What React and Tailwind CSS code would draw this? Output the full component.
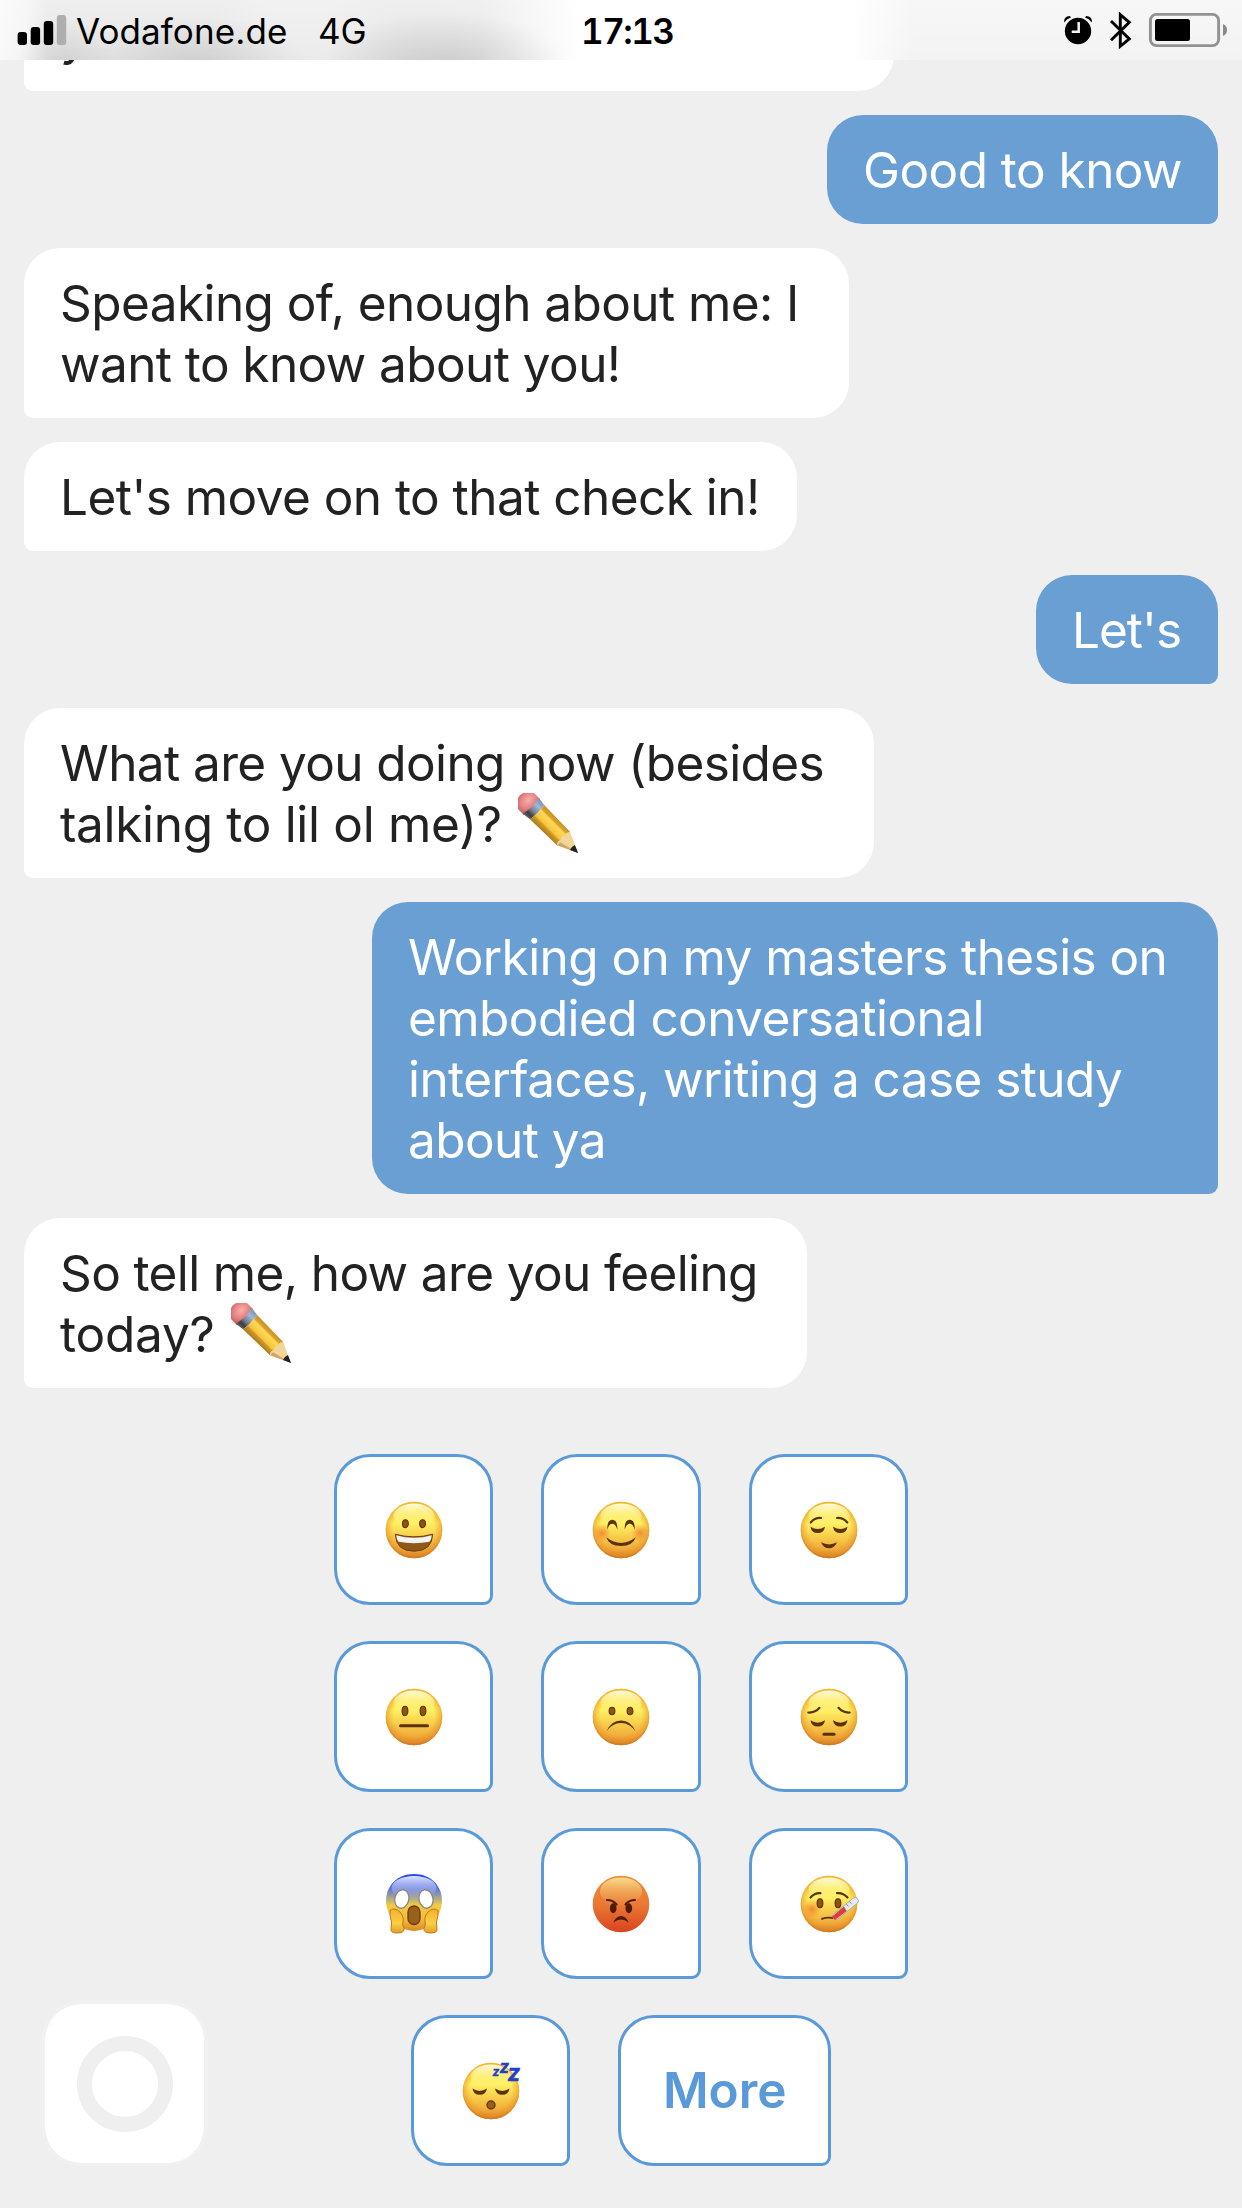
import React from "react";

const INK = "#5c3209";

function StatusBar() {
  return (
    <header className="absolute inset-x-0 top-0 z-10 flex h-[60px] items-center overflow-hidden bg-[linear-gradient(90deg,#f9f9f9_0px,#f4f4f4_25px,#e6e6e6_48px,#e6e6e6_210px,#ebebeb_270px,#ebebeb_330px,#e6e6e6_400px,#e8e8e8_480px,#f4f4f4_530px,#ffffff_580px,#ffffff_850px,#f3f3f3_915px,#f3f3f3_100%)]">
      <div className="absolute inset-0 bg-[radial-gradient(ellipse_50px_46px_at_66px_66px,#00000018,transparent),radial-gradient(ellipse_115px_52px_at_195px_68px,#0000001c,transparent),radial-gradient(ellipse_125px_56px_at_445px_68px,#0000001f,transparent),linear-gradient(180deg,#ffffff55,transparent)]" />
      <div className="relative flex h-full w-full items-center">
        <svg className="ml-[17px] h-[60px] w-[50px] shrink-0" viewBox="17 0 50 60" aria-label="Signal strength">
          <rect x="17.6" y="32" width="9.4" height="13" rx="3" />
          <rect x="30.7" y="27" width="9.4" height="18" rx="3" />
          <rect x="43.8" y="21" width="9.4" height="24" rx="3" />
          <rect x="56.8" y="15" width="9.4" height="30" rx="3" fill="#aeaeae" />
        </svg>
        <span className="ml-[9px] w-[242px] pt-[2px] text-[35px] leading-[60px] tracking-[0.1px]">Vodafone.de</span>
        <span className="pt-[2px] text-[35px] leading-[60px]">4G</span>
        <span className="absolute left-[581px] pt-[2px] text-[35px] font-semibold leading-[60px] tracking-[-1.5px] tabular-nums">17:13</span>
        <div className="ml-auto flex h-full items-center">
          <svg className="h-[60px] w-[192px]" viewBox="1050 0 192 60" aria-label="Alarm, Bluetooth, battery">
            <circle cx="1078" cy="31" r="13.2" />
            <path d="M1064.300 22.500q-.8-6.500 5.500-6.500l1.200 1.500q-4 1.200-6.700 5zM1091.700 22.500q.8-6.500-5.500-6.500l-1.200 1.500q4 1.200 6.700 5z" />
            <path d="M1078.700 22v9.700h-7" fill="none" stroke="#f3f3f3" strokeWidth="2.500" />
            <path d="M1111 21l18.300 18-9 7.300v-31.600l9 7.600-18.300 18" fill="none" stroke="#000" strokeWidth="2.900" />
            <rect x="1150.400" y="14.400" width="68.200" height="31.200" rx="6" fill="none" stroke="#929292" strokeWidth="2.900" />
            <rect x="1155" y="19" width="35" height="22" rx="2.5" />
            <path d="M1223 24q4 1.5 4 6t-4 6z" fill="#8a8a8a" />
          </svg>
        </div>
      </div>
    </header>
  );
}

function Pencil() {
  return (
    <svg className="-mt-[6px] ml-[3px] inline-block h-[60px] w-[60px] align-[-11px]" viewBox="0 0 60 60" aria-label="Pencil">
      <defs>
        <linearGradient id="pencilBody" x1="0" y1="0" x2="0" y2="1">
          <stop offset="0" stopColor="#c88f22" />
          <stop offset=".22" stopColor="#d9a42e" />
          <stop offset=".3" stopColor="#ffd95a" />
          <stop offset=".66" stopColor="#f6c53a" />
          <stop offset=".74" stopColor="#cf9a28" />
          <stop offset="1" stopColor="#a8791c" />
        </linearGradient>
        <linearGradient id="pencilMetal" x1="0" y1="0" x2="0" y2="1">
          <stop offset="0" stopColor="#7890b4" />
          <stop offset=".3" stopColor="#a3b6d2" />
          <stop offset=".6" stopColor="#77808f" />
          <stop offset=".8" stopColor="#3c3c40" />
          <stop offset="1" stopColor="#66666a" />
        </linearGradient>
        <radialGradient id="pencilEraser" cx=".55" cy=".4" r=".7">
          <stop offset="0" stopColor="#f8b0ae" />
          <stop offset=".6" stopColor="#e4807f" />
          <stop offset="1" stopColor="#b9585c" />
        </radialGradient>
      </defs>
      <g transform="rotate(45)">
        <path d="M20-11.3H12Q4-10 3 0Q4 9.500 12 11.300H20z" fill="url(#pencilEraser)" />
        <path d="M18-11.300Q21 0 18 11.300L27 10Q29 0 27-10z" fill="url(#pencilMetal)" />
        <path d="M27-10Q29 0 27 10L64.500 9.300L67 0L64.500-9.300z" fill="url(#pencilBody)" />
        <path d="M64.500-9.300L84.500 0L64.500 9.300Q61.500 7 63.500 3Q60.500 0 63.500-3Q61.500-6.500 64.500-9.300z" fill="#f3d597" />
        <path d="M64.500 9.300L84.500 0L64.500 5z" fill="#cfa566" />
        <path d="M77-3.500L85 0L77 3.500Q75.500 0 77-3.500z" fill="#222" />
      </g>
    </svg>
  );
}

function Bubble({ mine, className = "", children }) {
  return (
    <div
      className={
        (mine
          ? "self-end rounded-[36px] rounded-br-[9px] bg-[#699fd3] text-white "
          : "self-start rounded-[36px] rounded-bl-[9px] bg-white text-[#222222] ") +
        "px-9 pt-[25px] pb-[23px] text-[49.5px] leading-[61px] whitespace-nowrap " +
        className
      }
    >
      {children}
    </div>
  );
}

function Ball({ fill = "url(#faceBase)" }) {
  return (
    <>
      <circle r="28.300" fill={fill} />
      {fill === "url(#faceBase)" && (
        <>
          <circle r="28.300" fill="url(#faceEdge)" />
          <ellipse cy="-14" rx="20.500" ry="12.500" fill="url(#faceGloss)" />
        </>
      )}
    </>
  );
}

function Eyes({ dx = 9, y = -6, rx = 3.4, ry = 4.6 }) {
  return (
    <g fill="#8a5413" stroke={INK} strokeWidth="1.1">
      <ellipse cx={-dx} cy={y} rx={rx - 0.5} ry={ry - 0.5} />
      <ellipse cx={dx} cy={y} rx={rx - 0.5} ry={ry - 0.5} />
    </g>
  );
}

function ClosedEyes({ y }) {
  return (
    <g transform={`translate(0 ${y})`} fill={INK}>
      <path d="M-18.500-1.300Q-11.500 3.500-4 -1.300Q-5 5-11.300 5T-18.500-1.300z" />
      <path d="M18.500-1.300Q11.500 3.500 4-1.300Q5 5 11.300 5T18.500-1.300z" />
    </g>
  );
}

function Blush({ x, y }) {
  return <circle cx={x} cy={y} r="9" fill="url(#faceBlush)" />;
}

const line = { fill: "none", stroke: INK, strokeWidth: 2.2, strokeLinecap: "round" };

const faces = {
  grinning: (
    <>
      <Ball />
      <Eyes dx={8.600} y={-6.300} ry={4.500} />
      <path d="M-18.700 4.200Q0 9.500 18.700 4.200Q18 21.200 0 21.200T-18.700 4.200z" fill="#8f5a18" stroke="#6e3f0a" strokeWidth="1" />
      <path d="M-17.800 5.200Q0 10.500 17.800 5.200Q17.500 9.500 15.500 11.800Q0 14.500-15.500 11.800Q-17.500 9.500-17.800 5.200z" fill="#f1f3f7" />
    </>
  ),
  blushing: (
    <>
      <Ball />
      <Blush x={-19} y={3} />
      <Blush x={19} y={3} />
      <g fill={INK}>
        <path d="M-13.700-.500Q-14-10.300-8.700-10.300T-3.700-.500Q-5.500-6.200-8.700-6.200T-13.700-.500z" />
        <path d="M13.700-.500Q14-10.300 8.700-10.300T3.700-.500Q5.500-6.200 8.700-6.200T13.700-.500z" />
        <path d="M-14.800 7.300Q0 18.500 14.800 7.300Q12 16 0 16T-14.800 7.300z" />
      </g>
    </>
  ),
  relieved: (
    <>
      <Ball />
      <path d="M-18.300-7.500Q-14-12.500-8-12M18.300-7.500Q14-12.500 8-12" {...line} />
      <ClosedEyes y={-2} />
      <path d="M-8 12.300Q0 16.500 8 12.300Q5.500 18.300 0 18.300T-8 12.300z" fill={INK} />
    </>
  ),
  neutral: (
    <>
      <Ball />
      <Eyes ry={5.200} />
      <path d="M-13.500 8.800H13.500" {...line} strokeWidth="3" />
    </>
  ),
  frowning: (
    <>
      <Ball />
      <Eyes ry={4.300} />
      <path d="M-14.500 14.500Q-10 3.500 0 3.500T14.500 14.500Q9 6 0 6T-14.500 14.500z" fill={INK} />
    </>
  ),
  pensive: (
    <>
      <Ball />
      <path d="M-20.700-4.500Q-14-4-9.500-9.200M20.700-4.500Q14-4 9.500-9.200" {...line} />
      <ClosedEyes y={4.600} />
      <path d="M-5 17.300H5" {...line} strokeWidth="3" />
    </>
  ),
  screaming: (
    <>
      <path d="M-28-3C-28-19-16-30 0-30S28-19 28-3C28 12 14 27 0 27S-28 12-28-3z" fill="url(#screamHead)" />
      <ellipse cy="-16" rx="22.500" ry="12" fill="url(#screamGloss)" />
      <g fill="#fff" stroke="#8a8a80" strokeWidth="1.300">
        <ellipse cx="-12.200" cy="-5" rx="7" ry="9.300" transform="rotate(12 -12.200 -5)" />
        <ellipse cx="12" cy="-5" rx="7" ry="9.300" transform="rotate(-12 12 -5)" />
      </g>
      <rect x="-6" y="2" width="12" height="18.500" rx="6" fill="#98601c" stroke="#6b3c08" strokeWidth="1.300" />
      <g fill="url(#screamHand)" stroke="#c07a16" strokeWidth="1">
        <path d="M-24 6.500Q-19 3-14 8Q-9 14-11.500 20L-9.800 25Q-10 29-16.500 29T-23 26L-22.500 18Q-24.500 12-24 6.500z" />
        <path d="M24 6.500Q19 3 14 8Q9 14 11.500 20L9.800 25Q10 29 16.500 29T23 26L22.500 18Q24.500 12 24 6.500z" />
      </g>
    </>
  ),
  angry: (
    <>
      <Ball fill="url(#angryBase)" />
      <ellipse cy="-12.500" rx="21" ry="14" fill="url(#angryGloss)" />
      <g fill="#4f1c0a">
        <ellipse cx="-7.800" cy="4.300" rx="3.300" ry="5" />
        <ellipse cx="7.800" cy="4.300" rx="3.300" ry="5" />
        <path d="M-7.500 18.500Q-5 12 0 12T7.500 18.500Q4 15.500 0 15.500T-7.500 18.500z" />
      </g>
      <path d="M-14-4Q-8-4-4.500.500M14-4Q8-4 4.500.500" {...line} stroke="#4f1c0a" />
    </>
  ),
  feverish: (
    <>
      <Ball />
      <Blush x={-17} y={5} />
      <Eyes y={-0.800} ry={5} />
      <path d="M-18.500-6.500Q-14-11.500-8.500-10.800M18.500-6.500Q14-11.500 8-10.800" {...line} />
      <path d="M-7 14.800Q-2 12.800 4 14" {...line} strokeWidth="1.800" />
      <g transform="translate(4.500 14.300) rotate(-39)">
        <rect x="0" y="-3.300" width="31" height="6.600" rx="3" fill="#e6e8ec" stroke="#a4a6aa" strokeWidth=".8" />
        <path d="M0-2.200L15-2.600V2.600L0 2.200z" fill="#e33b34" />
        <path d="M7-3v3M11-3v3M15-3v3M19-3v3M23-3v3" stroke="#777" strokeWidth=".8" />
      </g>
    </>
  ),
  sleeping: (
    <>
      <Ball />
      <ClosedEyes y={-1.200} />
      <circle cy="14" r="4" fill="#98601c" stroke="#6b3c08" strokeWidth="1.400" />
      <g fill="#2440c4" stroke="#2440c4" strokeWidth=".4" fontFamily="Inter, sans-serif" fontWeight="700" fontStyle="italic">
        <text x="1.500" y="-14.700" fontSize="12">z</text>
        <text x="8.500" y="-18.300" fontSize="17">z</text>
        <text x="16.500" y="-10" fontSize="22.500">z</text>
      </g>
    </>
  ),
};

function FaceGradients() {
  return (
    <svg className="absolute h-0 w-0" aria-hidden="true">
      <defs>
        <linearGradient id="faceBase" x1="0" y1="0" x2="0" y2="1">
          <stop offset="0" stopColor="#fbd229" />
          <stop offset=".38" stopColor="#fef062" />
          <stop offset=".6" stopColor="#f8d04c" />
          <stop offset=".85" stopColor="#f0aa3a" />
          <stop offset="1" stopColor="#d27d24" />
        </linearGradient>
        <radialGradient id="faceEdge" cx=".5" cy=".47" r=".53">
          <stop offset=".68" stopColor="#e89024" stopOpacity="0" />
          <stop offset=".9" stopColor="#e58b24" stopOpacity=".5" />
          <stop offset="1" stopColor="#cc741e" stopOpacity=".85" />
        </radialGradient>
        <linearGradient id="faceGloss" x1="0" y1="0" x2="0" y2="1">
          <stop offset="0" stopColor="#fffee6" stopOpacity=".95" />
          <stop offset=".5" stopColor="#fff9a0" stopOpacity=".5" />
          <stop offset="1" stopColor="#fff36c" stopOpacity="0" />
        </linearGradient>
        <radialGradient id="faceBlush">
          <stop offset="0" stopColor="#f0722a" stopOpacity=".75" />
          <stop offset="1" stopColor="#f0802a" stopOpacity="0" />
        </radialGradient>
        <linearGradient id="screamHead" x1="0" y1="0" x2="0" y2="1">
          <stop offset="0" stopColor="#1d45f5" />
          <stop offset=".25" stopColor="#5872dc" />
          <stop offset=".42" stopColor="#a9a78d" />
          <stop offset=".55" stopColor="#f2cb45" />
          <stop offset=".8" stopColor="#f3b93c" />
          <stop offset="1" stopColor="#d58a25" />
        </linearGradient>
        <linearGradient id="screamGloss" x1="0" y1="0" x2="0" y2="1">
          <stop offset="0" stopColor="#eceeff" stopOpacity=".95" />
          <stop offset="1" stopColor="#a9b4ea" stopOpacity="0" />
        </linearGradient>
        <linearGradient id="screamHand" x1="0" y1="0" x2="0" y2="1">
          <stop offset="0" stopColor="#f3b232" />
          <stop offset=".6" stopColor="#f9cf43" />
          <stop offset="1" stopColor="#e59d2a" />
        </linearGradient>
        <linearGradient id="angryBase" x1="0" y1="0" x2="0" y2="1">
          <stop offset="0" stopColor="#ee8a3c" />
          <stop offset=".5" stopColor="#ea7a35" />
          <stop offset="1" stopColor="#d8431d" />
        </linearGradient>
        <linearGradient id="angryGloss" x1="0" y1="0" x2="0" y2="1">
          <stop offset="0" stopColor="#f9dc8c" />
          <stop offset="1" stopColor="#f1a552" stopOpacity=".15" />
        </linearGradient>
      </defs>
    </svg>
  );
}

function Choice({ face, children }) {
  return (
    <button
      aria-label={face}
      className={
        "flex h-[151px] items-center justify-center rounded-[36px] rounded-br-[9px] border-[3px] border-[#5a9ad8] bg-white " +
        (face ? "w-[159.500px]" : "w-[213px]")
      }
    >
      {face ? (
        <svg className="h-[64px] w-[64px] overflow-visible" viewBox="-32 -32 64 64">
          {faces[face]}
        </svg>
      ) : (
        <span className="text-[49.5px] font-semibold text-[#5a9ad8]">{children}</span>
      )}
    </button>
  );
}

const rows = [
  ["grinning", "blushing", "relieved"],
  ["neutral", "frowning", "pensive"],
  ["screaming", "angry", "feverish"],
];

export default function App() {
  return (
    <div className="relative h-[2208px] w-[1242px] overflow-hidden bg-[#efefef] font-[Inter,sans-serif] text-black">
      <FaceGradients />
      <StatusBar />
      <main className="-mt-[18px] flex flex-col gap-6 px-6">
        <Bubble className="w-[870px]">y</Bubble>
        <Bubble mine className="w-[391px] tracking-[-0.54px]">Good to know</Bubble>
        <Bubble className="w-[825px] tracking-[-0.58px]">
          Speaking of, enough about me: I<br />
          want to know about you!
        </Bubble>
        <Bubble className="w-[773px] tracking-[-0.54px]">Let's move on to that check in!</Bubble>
        <Bubble mine className="w-[182px] tracking-[-1px]">Let's</Bubble>
        <Bubble className="w-[850px] tracking-[-0.6px]">
          What are you doing now (besides<br />
          <span className="tracking-[-0.32px]">talking to lil ol me)? <Pencil /></span>
        </Bubble>
        <Bubble mine className="w-[846px] tracking-[-0.58px]">
          Working on my masters thesis on<br />
          embodied conversational<br />
          interfaces, writing a case study<br />
          about ya
        </Bubble>
        <Bubble className="w-[783px] tracking-[-0.62px]">
          So tell me, how are you feeling<br />
          <span className="tracking-[-0.2px]">today? <Pencil /></span>
        </Bubble>
      </main>
      <section className="mt-[66px] flex flex-col gap-9">
        {rows.map((row) => (
          <div key={row[0]} className="flex justify-center gap-12">
            {row.map((face) => (
              <Choice key={face} face={face} />
            ))}
          </div>
        ))}
        <div className="flex justify-center gap-12">
          <Choice face="sleeping" />
          <Choice>More</Choice>
        </div>
      </section>
      <div className="absolute left-[42px] top-[2001px] flex h-[165px] w-[165px] items-center justify-center rounded-[39px] border-[3px] border-[#f1f1f1] bg-white bg-clip-padding">
        <div className="h-24 w-24 rounded-full border-[15px] border-[#efefef]" />
      </div>
    </div>
  );
}
